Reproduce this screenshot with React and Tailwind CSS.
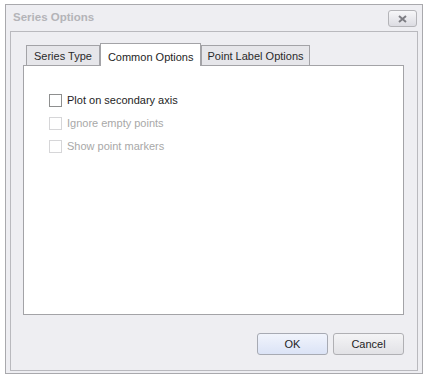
export default function App() {
  const font = { fontFamily: '"Liberation Sans", Arial, sans-serif' };
  const Check = ({ label, disabled }) => (
    <div className="flex items-center h-[23px]">
      <div
        className={
          "w-[13px] h-[13px] border bg-white " +
          (disabled ? "border-[#d6d6d8]" : "border-[#8e8f8f]")
        }
      />
      <span
        className={
          "ml-[5px] text-[11px] leading-none " +
          (disabled ? "text-[#a8a8a8]" : "text-[#1e1e1e]")
        }
      >
        {label}
      </span>
    </div>
  );
  return (
    <div className="w-[429px] h-[382px] bg-white pt-[4px] pl-[5px]" style={font}>
      <div className="w-[418px] h-[370px] border border-[#a9a9ad] bg-[#eeeef2] flex flex-col">
        <div className="h-[26px] flex items-center justify-between pl-[7px] pr-[5px]">
          <span className="text-[11.5px] font-bold text-[#b4b4b8]">Series Options</span>
          <div className="w-[29px] h-[17px] mt-[1px] rounded-[3px] border border-[#b4b4b8] bg-gradient-to-b from-[#f7f7f9] to-[#dcdce2] flex items-center justify-center">
            <svg width="9" height="8" viewBox="0 0 9 8">
              <path d="M1 1 L8 7 M8 1 L1 7" stroke="#7e7e84" strokeWidth="2" />
            </svg>
          </div>
        </div>
        <div className="flex-1 mx-[4px] mb-[2px] border border-[#b9b9be] flex flex-col pl-[12px] pr-[13px] pt-[11px]">
          <div className="flex items-end h-[22px] pl-[3px]">
            <div className="h-[20px] px-[7px] border border-b-0 border-[#a3a3a7] bg-[#e6e6ea] text-[11px] text-[#2a2a2a] flex items-center pt-[1px]">
              Series Type
            </div>
            <div className="relative z-10 h-[23px] -mb-[1px] px-[7px] border border-b-0 border-[#a3a3a7] bg-white text-[11px] text-[#1e1e1e] flex items-start pt-[5px]">
              Common Options
            </div>
            <div className="h-[20px] px-[5px] border border-b-0 border-[#a3a3a7] bg-[#e6e6ea] text-[11px] text-[#2a2a2a] flex items-center pt-[1px]">
              Point Label Options
            </div>
          </div>
          <div className="h-[250px] border border-[#a3a3a7] bg-white pl-[25px] pt-[23px]">
            <Check label="Plot on secondary axis" />
            <Check label="Ignore empty points" disabled />
            <Check label="Show point markers" disabled />
          </div>
          <div className="flex justify-end gap-[5px] mt-[18px]">
            <button className="w-[71px] h-[22px] rounded-[3px] border border-[#a7aab3] bg-gradient-to-b from-[#f1f4fc] to-[#dbe3f6] text-[11px] text-[#1e1e1e]">
              OK
            </button>
            <button className="w-[71px] h-[22px] rounded-[3px] border border-[#b0b0b4] bg-gradient-to-b from-[#f4f4f6] to-[#e2e2e6] text-[11px] text-[#1e1e1e]">
              Cancel
            </button>
          </div>
        </div>
      </div>
    </div>
  );
}
